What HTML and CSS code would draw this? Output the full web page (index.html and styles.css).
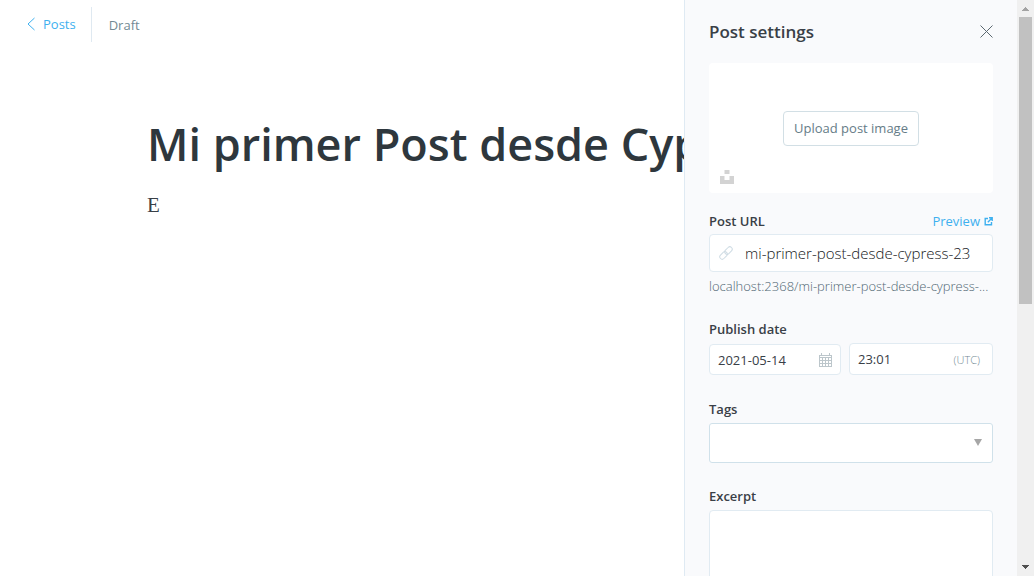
FILE: index.html
```html
<!DOCTYPE html>
<html lang="en">
<head>
<meta charset="utf-8">
<title>Post editor</title>
<link rel="stylesheet" href="styles.css">
</head>
<body>
<div class="app">
  <main class="editor">
    <header class="topbar">
      <a class="back" href="#posts">
        <svg class="back-icon" viewBox="0 0 8 14" aria-hidden="true"><path d="M7.500 1 1 7l6.500 6"/></svg>
        <span>Posts</span>
      </a>
      <span class="status">Draft</span>
    </header>
    <div class="document">
      <input class="title" type="text" aria-label="Post title" value="Mi primer Post desde Cypress 23">
      <p class="body-text">E</p>
    </div>
  </main>

  <aside class="settings">
    <header class="settings-header">
      <h2 class="settings-title">Post settings</h2>
      <button class="close" type="button" aria-label="Close">
        <svg viewBox="0 0 14 14" aria-hidden="true"><path d="M1.500 .5l12 12M13.500 .5l-12 12"/></svg>
      </button>
    </header>

    <div class="image-box">
      <button class="upload" type="button">Upload post image</button>
      <button class="unsplash" type="button" aria-label="Choose from Unsplash">
        <svg viewBox="0 0 14 14" aria-hidden="true"><path d="M4.500 0h5v4h-5zM0 6h4.500v4h5V6H14v8H0z"/></svg>
      </button>
    </div>

    <section class="field">
      <div class="label-row">
        <label class="label" for="url">Post URL</label>
        <a class="preview" href="#preview">Preview
          <svg viewBox="0 0 9 9" aria-hidden="true"><path d="M4 1.500H1.200v6.300h6.300V5M5 .8h3.200V4M8 1 3.800 5.200"/></svg>
        </a>
      </div>
      <div class="control control-url">
        <svg class="link-icon" viewBox="0 0 14 14" aria-hidden="true"><g transform="rotate(-45 7 7)"><rect x="-.8" y="4.600" width="8.600" height="4.800" rx="2.400"/><rect x="6.200" y="4.600" width="8.600" height="4.800" rx="2.400"/></g></svg>
        <input class="input input-url" id="url" type="text" value="mi-primer-post-desde-cypress-23">
      </div>
      <p class="hint">localhost:2368/mi-primer-post-desde-cypress-...</p>
    </section>

    <section class="field">
      <label class="label" for="date">Publish date</label>
      <div class="date-row">
        <div class="control control-date">
          <input class="input" id="date" type="text" value="2021-05-14">
          <svg class="calendar-icon" viewBox="0 0 13 14" shape-rendering="crispEdges" aria-hidden="true"><path d="M.5 2.500h12v11H.5zM0 4.500h13M0 7.500h13M0 10.500h13M3.500 5v8M6.500 5v8M9.500 5v8M2.500 0v3M10.500 0v3"/></svg>
        </div>
        <div class="control control-time">
          <input class="input" type="text" aria-label="Publish time" value="23:01">
          <span class="zone">(UTC)</span>
        </div>
      </div>
    </section>

    <section class="field">
      <label class="label" for="tags">Tags</label>
      <div class="select-wrap">
        <select class="select" id="tags"><option value=""></option></select>
        <svg class="caret" viewBox="0 0 8 7" aria-hidden="true"><path d="M0 0h8L4 7z"/></svg>
      </div>
    </section>

    <section class="field">
      <label class="label" for="excerpt">Excerpt</label>
      <textarea class="textarea" id="excerpt"></textarea>
    </section>
  </aside>

  <div class="scrollbar" aria-hidden="true">
    <svg class="scroll-arrow" viewBox="0 0 17 17" shape-rendering="crispEdges"><path fill="#a3a3a3" d="M8 7h1v1h1v1h1v1h1v1H5v-1h1V9h1V8h1z"/></svg>
    <div class="scroll-track"><div class="scroll-thumb"></div></div>
    <svg class="scroll-arrow" viewBox="0 0 17 17" shape-rendering="crispEdges"><path fill="#505050" d="M5 6h7v1h-1v1h-1v1H9v1H8V9H7V8H6V7H5z"/></svg>
  </div>
</div>
</body>
</html>
```
FILE: styles.css
```css
* { box-sizing: border-box; }

body {
  margin: 0;
  font-family: "Segoe UI", "Open Sans", "Noto Sans", sans-serif;
  font-size: 13px;
  color: #394047;
  background: #fff;
}

button, input, select, textarea { font: inherit; color: inherit; }
h2, p { margin: 0; }
svg { display: block; fill: none; stroke: currentColor; flex: none; }

.app { display: flex; height: 100vh; overflow: hidden; }

.editor { flex: 1; min-width: 0; }

.topbar { display: flex; align-items: center; padding: 7px 27px; }
.back {
  display: flex;
  align-items: center;
  gap: 8px;
  height: 35px;
  padding: 0 15px 2px 0;
  border-right: 1px solid #dfe9f1;
  color: #3eb0ef;
  text-decoration: none;
}
.back-icon { width: 8px; height: 14px; }
.status { padding-left: 17px; color: #738a94; }

.document { padding: 62px 0 0 147px; }
.title {
  display: block;
  width: 100%;
  height: 64px;
  padding: 0;
  border: 0;
  outline: 0;
  background: none;
  font-size: 45px;
  font-weight: 600;
  color: #2e373d;
}
.body-text {
  padding-top: 15px;
  font-family: "Liberation Serif", serif;
  font-size: 21px;
  line-height: 30px;
}

.settings {
  flex: 0 0 333px;
  padding: 0 24px;
  border-left: 1px solid #dfeaf3;
  background: #f9fafc;
  overflow: hidden;
}
.settings-header {
  display: flex;
  align-items: center;
  justify-content: space-between;
  height: 63px;
}
.settings-title { font-size: 17px; font-weight: 600; }
.close { padding: 0; border: 0; background: none; color: #5b6870; }
.close svg { width: 14px; height: 14px; stroke-width: 1; }

.image-box {
  position: relative;
  display: flex;
  align-items: center;
  justify-content: center;
  height: 130px;
  border-radius: 4px;
  background: #fff;
}
.upload {
  height: 35px;
  padding: 0 10px;
  border: 1px solid #d2dfe5;
  border-radius: 4px;
  background: #fff;
  color: #667c87;
}
.unsplash {
  position: absolute;
  left: 11px;
  bottom: 9px;
  padding: 0;
  border: 0;
  background: none;
  color: #d3d3d3;
}
.unsplash svg { width: 14px; height: 14px; fill: currentColor; stroke: none; }

.field { padding-top: 18px; }
.field + .field { padding-top: 23px; }
.label { display: block; font-weight: 600; line-height: 20px; }
.label-row { display: flex; justify-content: space-between; }
.preview {
  display: flex;
  align-items: center;
  gap: 4px;
  color: #3eb0ef;
  line-height: 20px;
  text-decoration: none;
}
.preview svg { width: 9px; height: 9px; stroke-width: 1.4; }

.control {
  display: flex;
  align-items: center;
  border: 1px solid #e1ebf2;
  border-radius: 4px;
  background: #fff;
}
.input { flex: 1; width: 100%; min-width: 0; padding: 0; border: 0; outline: 0; background: none; }
.control-url { height: 38px; margin-top: 3px; padding: 0 9px; gap: 12px; }
.input-url { font-size: 15px; font-weight: 300; color: #15171a; }
.link-icon { width: 14px; height: 14px; color: #cfdce4; overflow: visible; }
.hint {
  padding-top: 4px;
  color: #4f6672;
  font-weight: 300;
  line-height: 20px;
  overflow: hidden;
  white-space: nowrap;
  text-overflow: ellipsis;
}

.date-row { display: grid; grid-template-columns: 132fr 144fr; gap: 8px; align-items: end; padding: 4px 0 1px; }
.control-date { height: 31px; padding: 0 8px; }
.control-time { height: 32px; padding: 0 12px 0 8px; }
.calendar-icon { width: 13px; height: 14px; color: #bcc6cb; }
.zone { color: #738a94; font-size: 11px; font-weight: 300; }

.select-wrap { position: relative; margin-top: 4px; }
.select {
  display: block;
  width: 100%;
  height: 40px;
  border: 1px solid #d0e1ea;
  border-radius: 3px;
  background: #fff;
  appearance: none;
}
.caret {
  position: absolute;
  right: 11px;
  top: 16px;
  width: 8px;
  height: 7px;
  fill: #a6a6a6;
  stroke: none;
  pointer-events: none;
}

.textarea {
  display: block;
  width: 100%;
  height: 108px;
  margin-top: 4px;
  border: 1px solid #e1ebf2;
  border-radius: 4px;
  background: #fff;
  resize: none;
}

.scrollbar { display: flex; flex-direction: column; flex: 0 0 17px; background: #f0f0f0; }
.scroll-arrow { width: 17px; height: 17px; stroke: none; }
.scroll-track { flex: 1; padding: 0 2px; }
.scroll-thumb { height: 53%; background: #c1c1c1; }
```
